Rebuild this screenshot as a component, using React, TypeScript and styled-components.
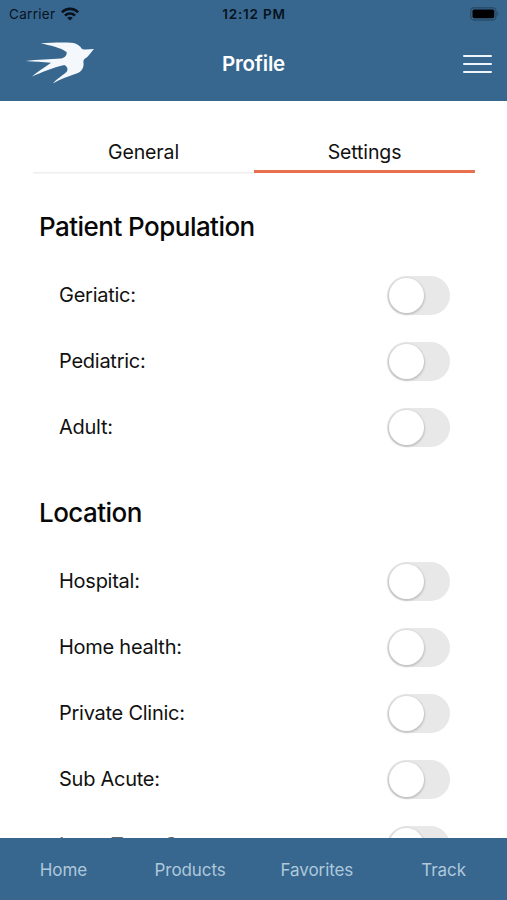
import React from "react";
import styled, { createGlobalStyle } from "styled-components";

const GlobalStyle = createGlobalStyle`
  * { box-sizing: border-box; }
  body { margin: 0; background: #fff; font-family: Inter, "Liberation Sans", sans-serif; color: #111; }
`;

const Screen = styled.div`
  height: 900px;
  display: flex;
  flex-direction: column;
  overflow: hidden;
  background: #fff;
`;

const Header = styled.header`
  height: 101px;
  flex: none;
  background: #37678f;
`;

const StatusBar = styled.div`
  height: 28px;
  display: grid;
  grid-template-columns: 1fr auto 1fr;
  align-items: center;
  padding: 0 8px 0 9px;
  color: #08131d;
`;

const Carrier = styled.div`
  display: flex;
  align-items: center;
  gap: 6px;
  font-size: 13.5px;
  letter-spacing: 0.3px;
`;

const Clock = styled.div`
  font-size: 13.5px;
  font-weight: 600;
  letter-spacing: 0.8px;
`;

const Battery = styled.svg`
  justify-self: end;
  display: block;
`;

const NavBar = styled.div`
  height: 73px;
  display: grid;
  grid-template-columns: 1fr auto 1fr;
  align-items: center;
  padding: 0 15px 3px 25px;
`;

const Title = styled.h1`
  margin: 0 0 0 -10px;
  color: #fff;
  font-size: 20.5px;
  font-weight: 600;
  letter-spacing: -0.2px;
`;

const MenuButton = styled.button`
  justify-self: end;
  width: 29px;
  height: 18px;
  padding: 0;
  margin-top: 2px;
  border: 0;
  background: none;
  display: flex;
  flex-direction: column;
  justify-content: space-between;
`;

const MenuLine = styled.span`
  width: 100%;
  height: 2px;
  border-radius: 1px;
  background: #eef6fc;
`;

const Content = styled.main`
  flex: 1;
  min-height: 0;
  overflow: hidden;
`;

const Tabs = styled.div`
  display: flex;
  align-items: flex-end;
  height: 72px;
  margin: 0 32px 0 33px;
`;

const Tab = styled.button<{ $active?: boolean }>`
  flex: 1;
  height: 42px;
  padding: 0;
  border: 0;
  box-shadow: ${(p) => (p.$active ? "inset 0 -3px #e8704f" : "inset 0 -1px #efefef, 0 1px #f5f5f5")};
  background: none;
  color: #111;
  font: 400 19.5px/42px Inter, "Liberation Sans", sans-serif;
  letter-spacing: -0.12px;
`;

const Section = styled.section`
  padding: 36px 57px 0 39px;
  & + & { padding-top: 35px; }
`;

const SectionTitle = styled.h2`
  margin: 0 0 17px;
  font-size: 26px;
  line-height: 36px;
  font-weight: 500;
  letter-spacing: -0.54px;
  color: #080808;
`;

const Row = styled.div<{ $muted?: boolean }>`
  display: flex;
  align-items: center;
  justify-content: space-between;
  height: 66px;
  padding-left: 20px;
  font-size: 20px;
  letter-spacing: -0.26px;
  color: ${(p) => (p.$muted ? "#666" : "#111")};
`;

const Track = styled.button`
  width: 63px;
  height: 39px;
  padding: 1px 2px;
  border: 0;
  border-radius: 20px;
  background: #e8e8e8;
`;

const Knob = styled.span`
  display: block;
  width: 35px;
  height: 35px;
  border-radius: 50%;
  background: #fff;
  box-shadow: 0 1px 2px 1px rgba(0, 0, 0, 0.17);
`;

const TabBar = styled.nav`
  flex: none;
  height: 62px;
  display: grid;
  grid-template-columns: repeat(4, 1fr);
  align-items: center;
  justify-items: center;
  padding-top: 1px;
  background: #37678f;
`;

const TabBarItem = styled.a`
  color: #afc8db;
  font-size: 17px;
  letter-spacing: -0.08px;
`;

const sections = [
  { title: "Patient Population", items: ["Geriatic:", "Pediatric:", "Adult:"] },
  { title: "Location", items: ["Hospital:", "Home health:", "Private Clinic:", "Sub Acute:", "Long Term Care:"] },
];

const SwallowLogo = () => (
  <svg width="70" height="43" viewBox="0 0 70 43" fill="#f4f8fd">
    <path d="M15.5 1.2C26 .5 40 .2 47 .8C52 1.4 55 3.8 57 7C61 8.4 65 7 69 7C66.5 9.5 64.5 13 62 15.2C59.5 16.6 58.3 17.5 58.4 20C59.3 25.5 57 29.5 51.5 31.6C43 34.5 35 37.5 27.8 41.6C32 36.5 38.5 33 41.7 29.7C43.3 27.5 42.6 25 39.5 23C28 25.5 16 30.5 7 34.6C11.5 30.2 20 25.5 26 20.8C18 20.2 10 19.5 .5 19C13 17.8 26 17.3 36 16.6C40 15.8 42.5 12.8 41.5 10C36 5.5 25 3.5 15.5 1.2Z" />
  </svg>
);

const WifiIcon = () => (
  <svg width="18" height="14" viewBox="0 0 18 14" fill="none" stroke="currentColor" strokeWidth="2.7">
    <path d="M.9 5.4C5.3.7 12.7.7 17.1 5.4M4 8.6c2.8-2.8 7.2-2.8 10 0" />
    <path d="M9 13.5 6.2 10.7c1.6-1.4 4-1.4 5.6 0Z" fill="currentColor" stroke="none" />
  </svg>
);

export default function App() {
  return (
    <>
      <GlobalStyle />
      <Screen>
        <Header>
          <StatusBar>
            <Carrier>Carrier <WifiIcon /></Carrier>
            <Clock>12:12 PM</Clock>
            <Battery width="29" height="14" viewBox="0 0 29 14">
              <rect x=".7" y=".7" width="25.3" height="12.3" rx="3.6" fill="none" stroke="#294d6b" strokeWidth="1.4" />
              <rect x="2.5" y="2.5" width="21.8" height="8.8" rx="1.7" fill="#000" />
              <path d="M27 4.8c1.7.7 1.7 3.5 0 4.2Z" fill="#294d6b" />
            </Battery>
          </StatusBar>
          <NavBar>
            <SwallowLogo />
            <Title>Profile</Title>
            <MenuButton aria-label="Menu"><MenuLine /><MenuLine /><MenuLine /></MenuButton>
          </NavBar>
        </Header>
        <Content>
          <Tabs>
            <Tab>General</Tab>
            <Tab $active>Settings</Tab>
          </Tabs>
          {sections.map((section) => (
            <Section key={section.title}>
              <SectionTitle>{section.title}</SectionTitle>
              {section.items.map((item, index) => (
                <Row key={item} $muted={index === 4}>
                  {item}
                  <Track role="switch" aria-checked={false} aria-label={item}><Knob /></Track>
                </Row>
              ))}
            </Section>
          ))}
        </Content>
        <TabBar>
          {["Home", "Products", "Favorites", "Track"].map((label) => (
            <TabBarItem key={label}>{label}</TabBarItem>
          ))}
        </TabBar>
      </Screen>
    </>
  );
}
